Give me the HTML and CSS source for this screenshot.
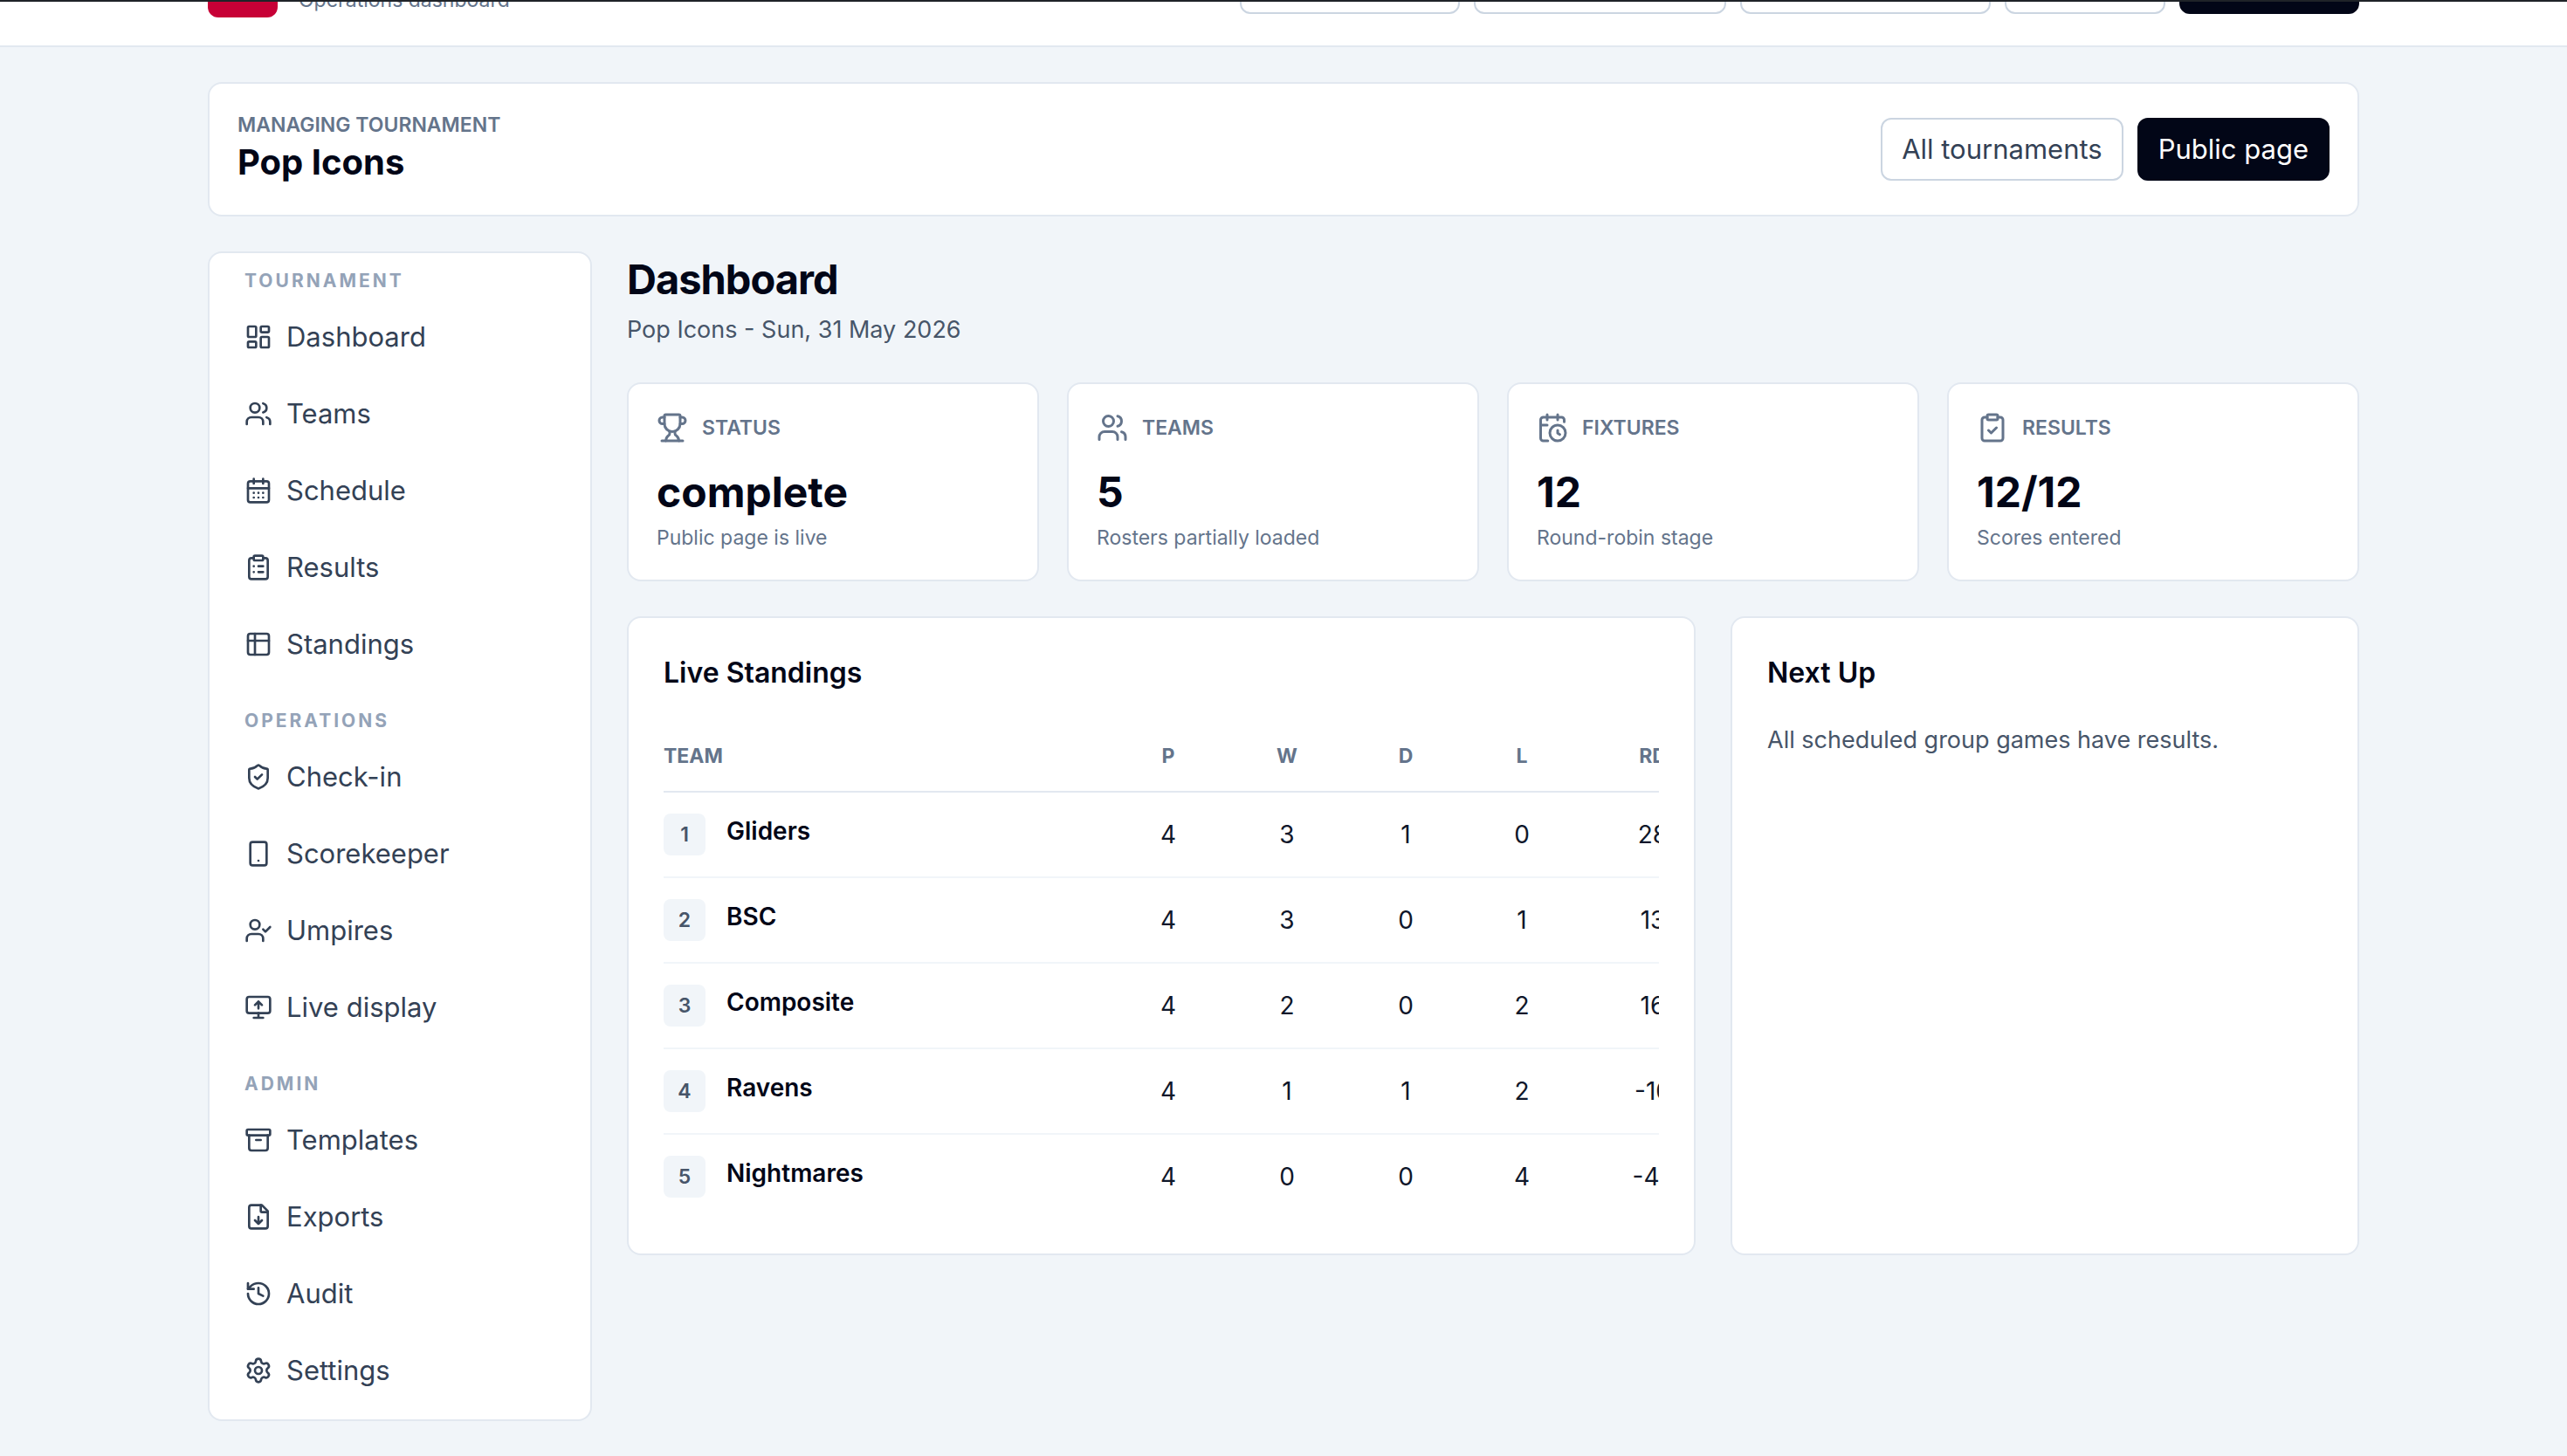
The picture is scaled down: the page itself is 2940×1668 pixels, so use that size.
FILE: index.html
```html
<!DOCTYPE html>
<html lang="en">
<head>
    <meta charset="utf-8">
    <title>Pop Icons - Dashboard</title>
    <link rel="stylesheet" href="styles.css">
</head>
<body>
    <!-- Icon sprite -->
    <svg class="sprite" aria-hidden="true">
        <symbol id="i-dashboard" viewBox="0 0 24 24"><rect x="3" y="3" width="7" height="9" rx="1"/><rect x="14" y="3" width="7" height="5" rx="1"/><rect x="14" y="12" width="7" height="9" rx="1"/><rect x="3" y="16" width="7" height="5" rx="1"/></symbol>
        <symbol id="i-users" viewBox="0 0 24 24"><path d="M16 21v-2a4 4 0 0 0-4-4H6a4 4 0 0 0-4 4v2"/><path d="M16 3.128a4 4 0 0 1 0 7.744"/><path d="M22 21v-2a4 4 0 0 0-3-3.87"/><circle cx="9" cy="7" r="4"/></symbol>
        <symbol id="i-calendar" viewBox="0 0 24 24"><path d="M8 2v4M16 2v4"/><rect x="3" y="4" width="18" height="18" rx="2"/><path d="M3 10h18M8 14h.01M12 14h.01M16 14h.01M8 18h.01M12 18h.01M16 18h.01"/></symbol>
        <symbol id="i-clipboard-list" viewBox="0 0 24 24"><rect x="8" y="2" width="8" height="4" rx="1"/><path d="M16 4h2a2 2 0 0 1 2 2v14a2 2 0 0 1-2 2H6a2 2 0 0 1-2-2V6a2 2 0 0 1 2-2h2"/><path d="M12 11h4M12 16h4M8 11h.01M8 16h.01"/></symbol>
        <symbol id="i-table" viewBox="0 0 24 24"><rect x="3" y="3" width="18" height="18" rx="2"/><path d="M3 9h18M9 3v18"/></symbol>
        <symbol id="i-shield" viewBox="0 0 24 24"><path d="M20 13c0 5-3.5 7.5-7.66 8.95a1 1 0 0 1-.67-.01C7.5 20.5 4 18 4 13V6a1 1 0 0 1 1-1c2 0 4.5-1.2 6.24-2.72a1.17 1.17 0 0 1 1.52 0C14.51 3.81 17 5 19 5a1 1 0 0 1 1 1z"/><path d="m9 12 2 2 4-4"/></symbol>
        <symbol id="i-phone" viewBox="0 0 24 24"><rect x="5" y="2" width="14" height="20" rx="2"/><path d="M12 18h.01"/></symbol>
        <symbol id="i-user-check" viewBox="0 0 24 24"><path d="m16 11 2 2 4-4"/><path d="M16 21v-2a4 4 0 0 0-4-4H6a4 4 0 0 0-4 4v2"/><circle cx="9" cy="7" r="4"/></symbol>
        <symbol id="i-monitor" viewBox="0 0 24 24"><path d="m9 10 3-3 3 3M12 13V7"/><rect x="2" y="3" width="20" height="14" rx="2"/><path d="M12 17v4M8 21h8"/></symbol>
        <symbol id="i-archive" viewBox="0 0 24 24"><rect x="2" y="3" width="20" height="5" rx="1"/><path d="M4 8v11a2 2 0 0 0 2 2h12a2 2 0 0 0 2-2V8M10 12h4"/></symbol>
        <symbol id="i-file-down" viewBox="0 0 24 24"><path d="M15 2H6a2 2 0 0 0-2 2v16a2 2 0 0 0 2 2h12a2 2 0 0 0 2-2V7Z"/><path d="M14 2v5a1 1 0 0 0 1 1h5M12 18v-6M9 15l3 3 3-3"/></symbol>
        <symbol id="i-history" viewBox="0 0 24 24"><path d="M3 12a9 9 0 1 0 9-9 9.75 9.75 0 0 0-6.74 2.74L3 8"/><path d="M3 3v5h5M12 7v5l4 2"/></symbol>
        <symbol id="i-settings" viewBox="0 0 24 24"><path d="M9.671 4.136a2.34 2.34 0 0 1 4.659 0 2.34 2.34 0 0 0 3.319 1.915 2.34 2.34 0 0 1 2.33 4.033 2.34 2.34 0 0 0 0 3.831 2.34 2.34 0 0 1-2.33 4.033 2.34 2.34 0 0 0-3.319 1.915 2.34 2.34 0 0 1-4.659 0 2.34 2.34 0 0 0-3.32-1.915 2.34 2.34 0 0 1-2.33-4.033 2.34 2.34 0 0 0 0-3.831A2.34 2.34 0 0 1 6.35 6.051a2.34 2.34 0 0 0 3.319-1.915"/><circle cx="12" cy="12" r="3"/></symbol>
        <symbol id="i-trophy" viewBox="0 0 24 24"><path d="M10 14.66v1.626a2 2 0 0 1-.976 1.696A5 5 0 0 0 7 21.978"/><path d="M14 14.66v1.626a2 2 0 0 0 .976 1.696A5 5 0 0 1 17 21.978"/><path d="M18 9h1.5a1 1 0 0 0 0-5H18M4 22h16"/><path d="M6 9a6 6 0 0 0 12 0V3a1 1 0 0 0-1-1H7a1 1 0 0 0-1 1z"/><path d="M6 9H4.5a1 1 0 0 1 0-5H6"/></symbol>
        <symbol id="i-calendar-clock" viewBox="0 0 24 24"><path d="M16 14v2.2l1.6 1M16 2v4M21 7.5V6a2 2 0 0 0-2-2H5a2 2 0 0 0-2 2v14a2 2 0 0 0 2 2h3.5M3 10h5M8 2v4"/><circle cx="16" cy="16" r="6"/></symbol>
        <symbol id="i-clipboard-check" viewBox="0 0 24 24"><rect x="8" y="2" width="8" height="4" rx="1"/><path d="M16 4h2a2 2 0 0 1 2 2v14a2 2 0 0 1-2 2H6a2 2 0 0 1-2-2V6a2 2 0 0 1 2-2h2"/><path d="m9 14 2 2 4-4"/></symbol>
    </svg>

    <header class="site-header">
        <div class="container header-inner">
            <div class="brand">
                <span class="brand-logo"></span>
                <span class="brand-sub">Operations dashboard</span>
            </div>
            <nav class="header-nav" aria-label="Main">
                <a class="button" href="#" aria-label="Tournaments"></a>
                <a class="button" href="#" aria-label="Organisations"></a>
                <a class="button" href="#" aria-label="Scorekeeping"></a>
                <a class="button" href="#" aria-label="Account"></a>
                <button class="button button-dark" type="button" aria-label="Sign out"></button>
            </nav>
        </div>
    </header>

    <div class="container page">
        <section class="card tournament-bar">
            <div>
                <p class="eyebrow">MANAGING TOURNAMENT</p>
                <p class="tournament-name">Pop Icons</p>
            </div>
            <div class="actions">
                <a class="button" href="#">All tournaments</a>
                <a class="button button-dark" href="#">Public page</a>
            </div>
        </section>

        <div class="layout">
            <aside class="card sidebar">
                <nav class="nav-group" aria-label="Tournament">
                    <p class="nav-title">TOURNAMENT</p>
                    <a class="nav-link" href="#"><svg class="icon"><use href="#i-dashboard"/></svg>Dashboard</a>
                    <a class="nav-link" href="#"><svg class="icon"><use href="#i-users"/></svg>Teams</a>
                    <a class="nav-link" href="#"><svg class="icon"><use href="#i-calendar"/></svg>Schedule</a>
                    <a class="nav-link" href="#"><svg class="icon"><use href="#i-clipboard-list"/></svg>Results</a>
                    <a class="nav-link" href="#"><svg class="icon"><use href="#i-table"/></svg>Standings</a>
                </nav>
                <nav class="nav-group" aria-label="Operations">
                    <p class="nav-title">OPERATIONS</p>
                    <a class="nav-link" href="#"><svg class="icon"><use href="#i-shield"/></svg>Check-in</a>
                    <a class="nav-link" href="#"><svg class="icon"><use href="#i-phone"/></svg>Scorekeeper</a>
                    <a class="nav-link" href="#"><svg class="icon"><use href="#i-user-check"/></svg>Umpires</a>
                    <a class="nav-link" href="#"><svg class="icon"><use href="#i-monitor"/></svg>Live display</a>
                </nav>
                <nav class="nav-group" aria-label="Admin">
                    <p class="nav-title">ADMIN</p>
                    <a class="nav-link" href="#"><svg class="icon"><use href="#i-archive"/></svg>Templates</a>
                    <a class="nav-link" href="#"><svg class="icon"><use href="#i-file-down"/></svg>Exports</a>
                    <a class="nav-link" href="#"><svg class="icon"><use href="#i-history"/></svg>Audit</a>
                    <a class="nav-link" href="#"><svg class="icon"><use href="#i-settings"/></svg>Settings</a>
                </nav>
            </aside>

            <main class="content">
                <div>
                    <h1>Dashboard</h1>
                    <p class="subtitle">Pop Icons - Sun, 31 May 2026</p>
                </div>

                <div class="stats">
                    <div class="card stat">
                        <div class="stat-head"><svg class="icon icon-lg"><use href="#i-trophy"/></svg>STATUS</div>
                        <p class="stat-value">complete</p>
                        <p class="stat-note">Public page is live</p>
                    </div>
                    <div class="card stat">
                        <div class="stat-head"><svg class="icon icon-lg"><use href="#i-users"/></svg>TEAMS</div>
                        <p class="stat-value">5</p>
                        <p class="stat-note">Rosters partially loaded</p>
                    </div>
                    <div class="card stat">
                        <div class="stat-head"><svg class="icon icon-lg"><use href="#i-calendar-clock"/></svg>FIXTURES</div>
                        <p class="stat-value">12</p>
                        <p class="stat-note">Round-robin stage</p>
                    </div>
                    <div class="card stat">
                        <div class="stat-head"><svg class="icon icon-lg"><use href="#i-clipboard-check"/></svg>RESULTS</div>
                        <p class="stat-value">12/12</p>
                        <p class="stat-note">Scores entered</p>
                    </div>
                </div>

                <div class="panels">
                    <section class="card panel">
                        <h2>Live Standings</h2>
                        <div class="table-scroll">
                            <table class="standings">
                                <colgroup>
                                    <col class="col-team">
                                    <col class="col-num">
                                    <col class="col-num">
                                    <col class="col-num">
                                    <col class="col-lost">
                                    <col class="col-diff">
                                </colgroup>
                                <thead>
                                    <tr><th>TEAM</th><th>P</th><th>W</th><th>D</th><th>L</th><th>RD</th></tr>
                                </thead>
                                <tbody>
                                    <tr><td><div class="team"><span class="rank">1</span>Gliders</div></td><td>4</td><td>3</td><td>1</td><td>0</td><td>28</td></tr>
                                    <tr><td><div class="team"><span class="rank">2</span>BSC</div></td><td>4</td><td>3</td><td>0</td><td>1</td><td>13</td></tr>
                                    <tr><td><div class="team"><span class="rank">3</span>Composite</div></td><td>4</td><td>2</td><td>0</td><td>2</td><td>16</td></tr>
                                    <tr><td><div class="team"><span class="rank">4</span>Ravens</div></td><td>4</td><td>1</td><td>1</td><td>2</td><td>-10</td></tr>
                                    <tr><td><div class="team"><span class="rank">5</span>Nightmares</div></td><td>4</td><td>0</td><td>0</td><td>4</td><td>-47</td></tr>
                                </tbody>
                            </table>
                        </div>
                    </section>

                    <section class="card panel">
                        <h2>Next Up</h2>
                        <p class="panel-text">All scheduled group games have results.</p>
                    </section>
                </div>
            </main>
        </div>
    </div>
</body>
</html>
```

FILE: styles.css
```css
:root {
    --bg: #f1f5f9;
    --card: #ffffff;
    --border: #e2e8f0;
    --border-strong: #cbd5e1;
    --ink: #020617;
    --text: #334155;
    --text-soft: #475569;
    --muted: #64748b;
    --faint: #94a3b8;
    --brand: #c70036;
}

* {
    box-sizing: border-box;
}

body {
    margin: 0;
    background-color: var(--bg);
    color: #0f172a;
    font-family: Inter, "Liberation Sans", sans-serif;
    font-size: 31px;
    line-height: 44px;
}

/* window edge above the page */
body::before {
    content: "";
    position: fixed;
    top: 0;
    left: 0;
    right: 0;
    height: 2px;
    background-color: #1f2328;
    z-index: 10;
}

h1, h2, p {
    margin: 0;
}

a {
    color: inherit;
    text-decoration: none;
}

.sprite {
    display: none;
}

.icon {
    width: 32px;
    height: 32px;
    flex: none;
    fill: none;
    stroke: currentColor;
    stroke-width: 2;
    stroke-linecap: round;
    stroke-linejoin: round;
}

.icon-lg {
    width: 36px;
    height: 36px;
}

.container {
    max-width: 2560px;
    margin: 0 auto;
    padding: 0 48px;
}

.card {
    background-color: var(--card);
    border: 2px solid var(--border);
    border-radius: 16px;
}

.button {
    display: flex;
    align-items: center;
    justify-content: center;
    height: 72px;
    padding: 0 22px;
    background-color: var(--card);
    color: var(--text);
    border: 2px solid var(--border-strong);
    border-radius: 12px;
    font: inherit;
}

.button-dark {
    background-color: var(--ink);
    color: #ffffff;
    border-color: var(--ink);
}

/* Header, scrolled mostly out of view */
.site-header {
    margin-top: -92px;
    background-color: var(--card);
    border-bottom: 2px solid var(--border);
}

.header-inner {
    display: flex;
    align-items: center;
    justify-content: space-between;
    height: 144px;
}

.brand {
    display: flex;
    align-items: flex-end;
    gap: 24px;
}

.brand-logo {
    width: 80px;
    height: 80px;
    border-radius: 12px;
    background-color: var(--brand);
}

.brand-sub {
    padding-bottom: 4px;
    color: var(--muted);
    font-size: 23px;
    line-height: 32px;
}

.header-nav {
    display: grid;
    grid-template-columns: 252px 289px 287px 184px 206px;
    gap: 16px;
}

/* Page */
.page {
    display: grid;
    gap: 40px;
    padding-top: 40px;
    padding-bottom: 40px;
}

.tournament-bar {
    display: flex;
    align-items: center;
    justify-content: space-between;
    padding: 32px;
}

.eyebrow {
    color: var(--muted);
    font-size: 23px;
    font-weight: 600;
    line-height: 30px;
}

.tournament-name {
    color: var(--ink);
    font-size: 40px;
    font-weight: 700;
    line-height: 56px;
}

.actions {
    display: flex;
    gap: 16px;
}

.layout {
    display: grid;
    grid-template-columns: 440px minmax(0, 1fr);
    gap: 40px;
    align-items: start;
}

/* Sidebar */
.sidebar {
    display: grid;
    gap: 32px;
    padding: 16px;
}

.nav-group {
    display: grid;
    gap: 8px;
}

.nav-title {
    padding: 0 24px;
    color: var(--faint);
    font-size: 21px;
    font-weight: 700;
    line-height: 32px;
    letter-spacing: 3px;
}

.nav-link {
    display: flex;
    align-items: center;
    gap: 16px;
    height: 80px;
    padding: 0 24px;
    color: var(--text);
    border-radius: 12px;
}

/* Main column */
h1 {
    color: var(--ink);
    font-size: 47px;
    font-weight: 700;
    line-height: 64px;
    letter-spacing: -1px;
}

.subtitle {
    margin-top: 6px;
    color: var(--text-soft);
    font-size: 27px;
    line-height: 40px;
}

.content {
    display: grid;
    gap: 40px;
}

.stats {
    display: grid;
    grid-template-columns: repeat(4, minmax(0, 1fr));
    gap: 32px;
}

.stat {
    padding: 32px;
}

.stat-head {
    display: flex;
    align-items: center;
    gap: 16px;
    height: 36px;
    color: var(--muted);
    font-size: 23px;
    font-weight: 600;
}

.stat-value {
    margin-top: 24px;
    color: var(--ink);
    font-size: 48px;
    font-weight: 700;
    line-height: 64px;
}

.stat-note {
    margin-top: 4px;
    color: var(--muted);
    font-size: 23px;
    line-height: 32px;
}

.panels {
    display: grid;
    grid-template-columns: minmax(0, 17fr) minmax(0, 10fr);
    gap: 40px;
}

.panel {
    padding: 40px;
}

h2 {
    margin-bottom: 34px;
    color: var(--ink);
    font-size: 32px;
    font-weight: 600;
    line-height: 46px;
}

.panel-text {
    color: var(--text-soft);
    font-size: 27px;
    line-height: 40px;
}

/* Standings */
.table-scroll {
    overflow-x: auto;
    scrollbar-width: none;
}

.standings {
    width: 1218px;
    table-layout: fixed;
    border-collapse: separate;
    border-spacing: 0;
    font-size: 28px;
    line-height: 40px;
}

.col-team {
    width: 510px;
}

.col-num {
    width: 136px;
}

.col-lost {
    width: 130px;
}

.col-diff {
    width: 170px;
}

.standings th {
    padding: 22px 0 24px;
    border-bottom: 2px solid var(--border);
    color: var(--muted);
    font-size: 23px;
    font-weight: 700;
    line-height: 32px;
}

.standings td {
    padding: 24px 0;
    border-bottom: 2px solid var(--bg);
    text-align: center;
}

.standings th:first-child {
    text-align: left;
}

.standings tr:last-child td {
    border-bottom: 0;
}

.team {
    display: flex;
    align-items: flex-start;
    gap: 24px;
    color: var(--ink);
    font-weight: 600;
}

.rank {
    width: 48px;
    height: 48px;
    border-radius: 8px;
    background-color: var(--bg);
    color: var(--text-soft);
    font-size: 23px;
    line-height: 48px;
    text-align: center;
}
```
